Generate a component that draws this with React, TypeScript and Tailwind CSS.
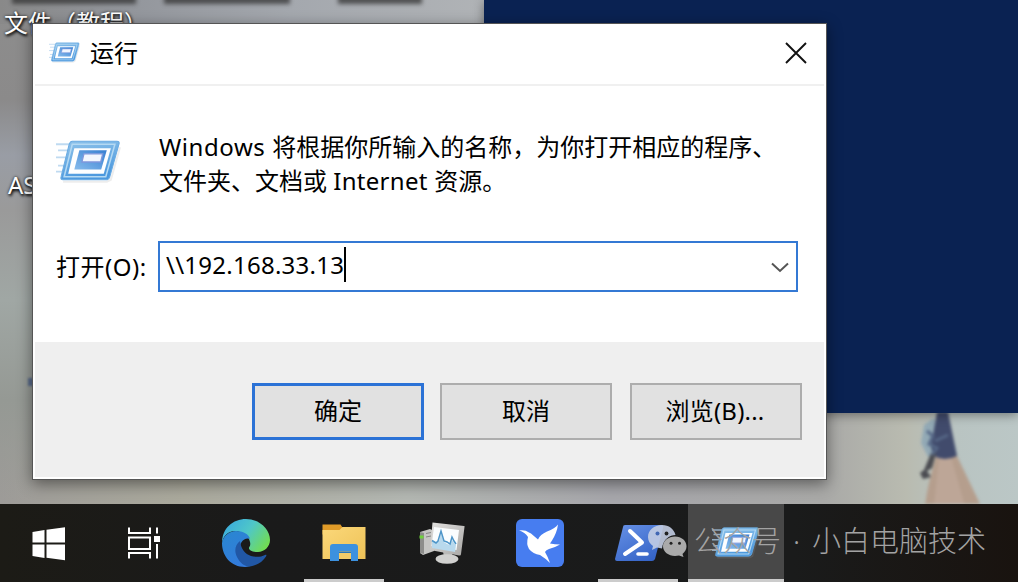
import React from 'react';

interface TaskItem {
  id: string;
  icon: React.ReactNode;
  running?: boolean;
  active?: boolean;
}

const RunIcon: React.FC<{ className?: string; id: string }> = ({ className, id }) => (
  <svg viewBox="0 0 64 44" className={className} fill="none">
    <defs>
      <linearGradient id={`${id}-frame`} x1="0" y1="0" x2="0.3" y2="1">
        <stop offset="0" stopColor="#8fc3ea" />
        <stop offset="1" stopColor="#4b98de" />
      </linearGradient>
      <linearGradient id={`${id}-core`} x1="0" y1="1" x2="1" y2="0">
        <stop offset="0" stopColor="#86bbec" />
        <stop offset="1" stopColor="#377fd2" />
      </linearGradient>
    </defs>
    <path d="M0 4h14M2 10h10M0 17h10M2 25h8M0 31h8" stroke="#a9cdec" strokeWidth="1.8" opacity="0.75" />
    <path d="M7 41h43l4-2 9-32" stroke="#9a9a9a" strokeWidth="2" opacity="0.18" />
    <path d="M16 1h44q3 0 2 3l-9 32q-1 3-4 3H7q-3 0-2-3l8-32q1-3 3-3z" fill={`url(#${id}-frame)`} stroke="#6aabe2" strokeWidth="1" />
    <path d="M16 4h42l-9 32H8z" stroke="#b4d9f3" strokeWidth="1.5" />
    <path d="M18 8h36l-7 25H12z" fill="#fdfeff" />
    <path d="M23 10h27l-5.500 19H18z" fill={`url(#${id}-core)`} />
    <path d="M27.500 13.500H46l-2 8H25.500z" fill="#f2f6fe" stroke="#7f97dc" strokeWidth="1.300" />
  </svg>
);

const WindowsIcon = () => (
  <svg viewBox="0 0 34 34" className="h-[34px] w-[34px] translate-x-px translate-y-px" fill="#fff">
    <path d="M0.500 5 12.500 3v12.500h-12zM14.500 2.700 33 0.300v15.200H14.500zM0.500 17.500h12V31L0.500 29zM14.500 17.500H33v15.800l-18.500-2.500z" />
  </svg>
);

const TaskViewIcon = () => (
  <svg viewBox="0 0 34 32" className="h-8 w-[34px]" fill="none" stroke="#fff" strokeWidth="2">
    <path d="M2 0.500V6h21V0.500M2 10.500h21V22H2zM2 31.500V26h21v5.500M30 0.500v6M30 17v14.500" />
    <path d="M27 9h6v6h-6z" fill="#fff" stroke="none" />
  </svg>
);

const EdgeIcon = () => (
  <svg viewBox="0 0 48 48" className="h-12 w-12">
    <defs>
      <linearGradient id="edge-top" x1="0" y1="0.200" x2="1" y2="0.700">
        <stop offset="0" stopColor="#39a9df" />
        <stop offset="0.500" stopColor="#4fc7c8" />
        <stop offset="1" stopColor="#72dd51" />
      </linearGradient>
      <linearGradient id="edge-left" x1="0" y1="0" x2="0.500" y2="1">
        <stop offset="0" stopColor="#2987d0" />
        <stop offset="1" stopColor="#337bdc" />
      </linearGradient>
    </defs>
    <path d="M0 24C0 9 11 0 24 0s24 10 24 21c0 7-6 12-12 12-6 0-9-2-9-4 0-1 2-2 1-6-1-6-8-11-15-11C6 12 1 17 0 24z" fill="url(#edge-top)" />
    <path d="M0 24c1-7 7-12 14-12 7 0 13 3 14 8-6-2-11 4-10 11 1 8 8 13 14 13-3 3-6 4-9 4C9 48 0 37 0 24z" fill="url(#edge-left)" />
    <path d="M18 22c-5 4-6 10-3 16 3 6 8 10 13 9.500 7-1 13-5 16-10 1-2 0-2-1-1.500-4 2-9 2.500-14 1-6-2-10-7-11-15z" fill="#2157a5" />
  </svg>
);

const FolderIcon = () => (
  <svg viewBox="0 0 44 38" className="h-[38px] w-11">
    <defs>
      <linearGradient id="folder-body" x1="0" y1="0" x2="1" y2="1">
        <stop offset="0" stopColor="#fbd87a" />
        <stop offset="1" stopColor="#eec257" />
      </linearGradient>
    </defs>
    <path d="M0.500 0.500h18l2 3h21v7h-41z" fill="#e09b28" />
    <path d="M0.500 6h17l3-3h23v32h-43z" fill="url(#folder-body)" />
    <path d="M8 37V23q0-3 3-3h22q3 0 3 3v14h-7v-9.500H17V37z" fill="#3c91df" />
    <path d="M17 27.500h12V35H17z" fill="#f2cb68" />
    <path d="M17 27.500h12v1.500H17z" fill="#2876b9" />
  </svg>
);

const MonitorIcon = () => (
  <svg viewBox="0 0 46 42" className="h-[42px] w-[46px]">
    <defs>
      <linearGradient id="monitor-case" x1="0" y1="0" x2="1" y2="1">
        <stop offset="0" stopColor="#e2e1df" />
        <stop offset="1" stopColor="#a9a8a6" />
      </linearGradient>
    </defs>
    <path d="M1 10 11 7l4 2v20L4 33l-3-2z" fill="#c6c6c4" />
    <path d="M1 10l4 1v21l-4-1z" fill="#8d8d8b" />
    <path d="M0.500 13.500h4v3h-4z" fill="#6ed33b" />
    <path d="M7 11.500l5-1M7 15l5-1" stroke="#858583" strokeWidth="1" />
    <path d="M24 29l9 2 1 5h-9z" fill="#b9b9b7" />
    <ellipse cx="28" cy="37" rx="11.500" ry="4.800" fill="#d1d1cf" />
    <path d="M13.500 0.500 45 4q1 0 .5 1l-3.500 27q0 2-2 1.500L11 28z" fill="url(#monitor-case)" />
    <path d="M15 5l25 3-2.500 20L12.500 24z" fill="#fafdfe" />
    <path d="M13 19l4 1 3-1 2-8 3 9 3 2 3 1 2-5 2 3 2 2-1 7-23-4z" fill="#b8d9ed" />
    <path d="M13 18.500l4 2.500 2-2 3-10 3 10 3 1 3 2 2-7 2 4 2 3" fill="none" stroke="#4d95c8" strokeWidth="1.500" />
  </svg>
);

const BirdIcon = () => (
  <svg viewBox="0 0 48 48" className="h-12 w-12">
    <rect width="48" height="48" rx="6" fill="#477df0" />
    <path d="M3 11.500q6-1 10 2l2 1 7 6q2-5 9-8 8-3 11-7-1 8-6 16l-2 3q5 1 10 1-5 3-11 4.500-3 1-4 3 3 5 5 11-5-5-10-8-7-1-11-6-3-5-1-12-3-5-9-6.500z" fill="#fff" />
  </svg>
);

const PowerShellIcon = () => (
  <svg viewBox="0 0 50 38" className="h-[38px] w-[50px] translate-x-px">
    <defs>
      <linearGradient id="ps-body" x1="0" y1="0" x2="0.700" y2="1">
        <stop offset="0" stopColor="#6791e6" />
        <stop offset="1" stopColor="#3564c7" />
      </linearGradient>
    </defs>
    <path d="M11 1h36q3 0 2 3l-8 31q-1 2-3 2H3q-2 0-2-2L9 3q0-2 2-2z" fill="url(#ps-body)" />
    <path d="M16 7l12 11.500L11 30" fill="none" stroke="#fff" strokeWidth="4" strokeLinecap="round" strokeLinejoin="round" />
    <path d="M24 30h9" stroke="#fff" strokeWidth="3.600" strokeLinecap="round" />
  </svg>
);

const WeChatIcon = () => (
  <svg viewBox="0 0 39 32" className="h-8 w-[39px]">
    <path d="M14 0C6 0 0 5.200 0 12c0 4 2 7 5 9l-1 4 5-2.500 5 1C15 14 22 10 27.500 10 26 4 21 0 14 0z" fill="#c3cde3" fillOpacity="0.900" />
    <path d="M27 11.500c-6.500 0-12 4.300-12 9.700s5.500 9.800 12 9.800l4-.5 4.500 1.500-1-3c2.500-2 4-4.700 4-7.700 0-5.500-5-9.800-11.500-9.800z" fill="#aaa" />
    <circle cx="9.500" cy="8.500" r="2" fill="#4166b3" />
    <circle cx="18.500" cy="8.500" r="1.900" fill="#222" />
    <circle cx="23" cy="18.200" r="1.500" fill="#222" />
    <circle cx="31.500" cy="18.200" r="1.500" fill="#222" />
  </svg>
);

const taskItems: TaskItem[] = [
  { id: 'edge', icon: <EdgeIcon /> },
  { id: 'explorer', icon: <FolderIcon />, running: true },
  { id: 'monitor', icon: <MonitorIcon /> },
  { id: 'bird', icon: <BirdIcon /> },
  { id: 'powershell', icon: <PowerShellIcon />, running: true },
  { id: 'run', icon: <RunIcon id="task-run" className="h-[33px] w-12" />, active: true },
];

const RunDialog = () => (
  <div className="absolute left-8 top-[23px] flex h-[457px] w-[795px] flex-col border border-[#555] bg-white pb-0.5 text-2xl text-black shadow-[0_4px_14px_rgba(0,0,0,0.45)]">
    <div className="mx-0.5 flex h-[62px] shrink-0 items-center border-b-2 border-[#f0f0f0] pb-[3px] pl-3.5 pr-[17px]">
      <RunIcon id="title-run" className="h-[22px] w-[31px]" />
      <span className="ml-2.5 leading-6">运行</span>
      <button className="ml-auto" aria-label="Close">
        <svg viewBox="0 0 22 22" className="h-[22px] w-[22px]" stroke="#111" strokeWidth="1.900">
          <path d="M1 1l20 20M21 1 1 21" />
        </svg>
      </button>
    </div>
    <div className="flex h-[256px] shrink-0 flex-col pl-[23px] pr-7">
      <div className="flex pt-11">
        <RunIcon id="body-run" className="mt-2.5 h-[45px] w-[65px] shrink-0" />
        <p className="ml-[38px] whitespace-nowrap leading-[34px]">
          <span className="tracking-[0.55px]">Windows </span>将根据你所输入的名称，为你打开相应的程序、
          <br />
          文件夹、文档或 <span className="tracking-[0.3px]">Internet </span>资源。
        </p>
      </div>
      <div className="mt-[43px] flex items-center">
        <label className="w-[102px] whitespace-nowrap tracking-[0.5px]">打开(O):</label>
        <div className="flex h-[51px] flex-1 items-center border-2 border-[#3479d4] bg-white pl-1.5 pr-[7px]">
          <span className="-translate-y-0.5 tracking-[0.25px]">\\192.168.33.13</span>
          <span className="h-[35px] w-0.5 -translate-y-0.5 bg-black"></span>
          <svg viewBox="0 0 18 11" className="ml-auto h-[11px] w-[18px] translate-y-px" fill="none" stroke="#555" strokeWidth="2">
            <path d="M1 1.500 9 9l8-7.500" />
          </svg>
        </div>
      </div>
    </div>
    <div className="mx-0.5 flex flex-1 justify-end gap-4 bg-[#efefef] pr-[22px] pt-[41px]">
      <button className="h-[57px] w-[172px] border-[3px] border-[#2b72d6] bg-[#e1e1e1] pb-0.5">确定</button>
      <button className="h-[57px] w-[172px] border-2 border-[#adadad] bg-[#e1e1e1] pb-0.5">取消</button>
      <button className="ml-0.5 h-[57px] w-[172px] border-2 border-[#adadad] bg-[#e1e1e1] pb-0.5 pr-0.5 tracking-[0.2px]">浏览(B)...</button>
    </div>
  </div>
);

const Taskbar = () => (
  <div className="relative flex h-[78px] bg-[linear-gradient(90deg,#1c1b16,#1a1a1a_25%,#1a1b1b_78%,#19130f)]">
    <div className="flex w-24 items-center justify-center">
      <WindowsIcon />
    </div>
    <div className="mr-1.5 flex w-24 items-center justify-center">
      <TaskViewIcon />
    </div>
    <div className="flex gap-0.5">
      {taskItems.map((item) => (
        <div
          key={item.id}
          className={`flex w-24 flex-col items-center ${item.active ? 'bg-[#484848]' : ''}`}
        >
          <div className="flex h-[75px] items-center pt-[3px]">{item.icon}</div>
          {item.running && <div className="h-[3px] w-20 bg-[#ccc]"></div>}
          {item.active && <div className="h-[3px] w-24 bg-[#ccc]"></div>}
        </div>
      ))}
    </div>
    <div className="absolute left-[648px] top-5 flex items-center whitespace-pre text-[29px] font-light leading-[34px] text-[#a3a3a3]">
      <WeChatIcon />
      <span className="ml-[7px]">公众号</span>
      <span className="w-[31px] text-center">·</span>
      <span>小白电脑技术</span>
    </div>
  </div>
);

const App: React.FC = () => {
  return (
    <div className="flex h-[582px] w-[1018px] flex-col overflow-hidden font-['Noto_Sans','Noto_Sans_CJK_SC',sans-serif]">
      <div className="relative h-[504px] overflow-hidden bg-[linear-gradient(90deg,#9d9b98,#aaa99c_18%,#b3b7b2_40%,#a6a6ab_60%,#a9a9a7_81%,#b9bbb0_89%,#b9c4c2_94%,#bbc7c6)]">
        <div className="absolute left-0 top-0 h-[500px] w-8 bg-[linear-gradient(180deg,#8d8d8d,#8b8a8a_20%,#999da5_31%,#9a9a9a_42%,#a0a7a4_60%,#959994_80%,transparent)]"></div>
        <div className="absolute left-0 top-0 h-6 w-[484px] bg-[linear-gradient(90deg,#898989,#92959b_25%,#a4a8ae_60%,#b0b3b6)]"></div>

        {/* Bottom edge of the labels above */}
        <div className="absolute left-3 top-[-5px] flex gap-7 blur-[2px]">
          <div className="h-[9px] w-[124px] bg-[#333]/75"></div>
          <div className="h-[9px] w-[126px] bg-[#333]/75"></div>
          <div className="ml-5 h-[9px] w-[84px] bg-[#333]/75"></div>
        </div>
        <div className="absolute left-1 top-2.5 whitespace-pre text-2xl leading-[26px] text-white [text-shadow:1px_2px_3px_#000,0_0_3px_#222]">
          文件（教程）
        </div>
        <div className="absolute left-2 top-[168px] text-2xl leading-[34px] text-white [text-shadow:1px_2px_3px_#000,0_0_3px_#222]">AS</div>
        <div className="absolute left-[28px] top-[378px] h-2 w-2 bg-[#596b8b] blur-[1px]"></div>

        {/* Wallpaper figure */}
        <svg viewBox="0 0 130 92" className="absolute left-[888px] top-[412px] h-[92px] w-[130px] blur-[1.5px]">
          <path d="M48 44h21l24 50H37q2-19 11-50z" fill="#b59e8d" />
          <path d="M51 45h12l14 49H46z" fill="#bda697" />
          <path d="M36 13l10-7 8 32-14 7-7-14z" fill="#92a9b5" />
          <path d="M49 0h11l9 44q-13 6-23 0l-3-9z" fill="#414b6c" />
          <path d="M43 41l6-3-5 18-5 3 4 6-8 2-3-6 4-3z" fill="#4b4c51" />
          <path d="M39 19l6 5-4 8 8 4-5 7M47 29l13-6" stroke="#566887" strokeWidth="3" fill="none" />
        </svg>

        <div className="absolute left-[484px] top-0 h-[413px] w-[534px] bg-[#0a2252] shadow-[0_2px_10px_rgba(0,0,0,0.4)]"></div>
        <RunDialog />
      </div>
      <Taskbar />
    </div>
  );
};

export default App;
